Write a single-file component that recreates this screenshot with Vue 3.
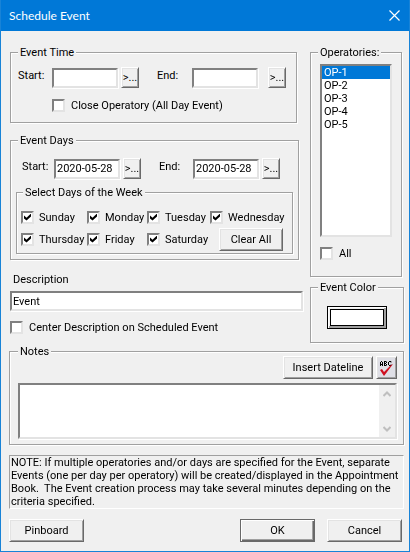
<template>
  <form class="dialog" @submit.prevent>
    <header class="title-bar">
      <h1 class="title">Schedule Event</h1>
      <button class="close-btn" type="button" aria-label="Close">
        <svg width="11" height="11" viewBox="0 0 11 11">
          <path d="M0.5 0.5L10.5 10.5M10.5 0.5L0.5 10.5" stroke="#fff" stroke-width="1.2" fill="none" />
        </svg>
      </button>
    </header>

    <main class="body">
      <div class="columns">
        <div class="main-col">
          <fieldset class="group time-group">
            <legend>Event Time</legend>
            <div class="range-row time-row">
              <label for="time-start">Start:</label>
              <input id="time-start" ref="timeStart" v-model="time.start" class="field" type="text" />
              <button class="btn pick-btn" type="button">&gt;...</button>
              <label for="time-end" class="end-label">End:</label>
              <input id="time-end" v-model="time.end" class="field" type="text" />
              <button class="btn pick-btn" type="button">&gt;...</button>
            </div>
            <label class="check all-day">
              <input v-model="allDay" type="checkbox" />
              <span>Close Operatory (All Day Event)</span>
            </label>
          </fieldset>

          <fieldset class="group days-group">
            <legend>Event Days</legend>
            <div class="range-row date-row">
              <label for="date-start">Start:</label>
              <input id="date-start" v-model="dates.start" class="field" type="text" />
              <button class="btn pick-btn" type="button">&gt;...</button>
              <label for="date-end" class="end-label">End:</label>
              <input id="date-end" v-model="dates.end" class="field" type="text" />
              <button class="btn pick-btn" type="button">&gt;...</button>
            </div>
            <fieldset class="group week-group">
              <legend>Select Days of the Week</legend>
              <div class="week">
                <label v-for="day in days" :key="day.name" class="check">
                  <input v-model="day.checked" type="checkbox" />
                  <span>{{ day.name }}</span>
                </label>
                <button class="btn clear-btn" type="button" @click="clearDays">Clear All</button>
              </div>
            </fieldset>
          </fieldset>

          <div class="description">
            <label for="description">Description</label>
            <input id="description" v-model="description" class="field" type="text" />
          </div>
          <label class="check center-check">
            <input v-model="centered" type="checkbox" />
            <span>Center Description on Scheduled Event</span>
          </label>
        </div>

        <div class="side-col">
          <fieldset class="group op-group">
            <legend id="op-legend">Operatories:</legend>
            <select v-model="selectedOps" class="op-list" multiple aria-labelledby="op-legend">
              <option v-for="op in operatories" :key="op" :value="op">{{ op }}</option>
            </select>
            <label class="check">
              <input v-model="allOps" type="checkbox" />
              <span>All</span>
            </label>
          </fieldset>

          <fieldset class="group color-group">
            <legend>Event Color</legend>
            <button class="swatch" type="button" aria-label="Event Color">
              <span class="swatch-fill" :style="{ background: color }"></span>
            </button>
          </fieldset>
        </div>
      </div>

      <fieldset class="group notes-group">
        <legend id="notes-legend">Notes</legend>
        <div class="notes-tools">
          <button class="btn dateline-btn" type="button">Insert Dateline</button>
          <button class="btn spell-btn" type="button" aria-label="Check spelling">
            <svg width="15" height="16" viewBox="0 0 15 16">
              <g fill="none" stroke="#000" stroke-width="1">
                <path d="M1.5 6V2M2 1.5H3M3.5 2V6M1.5 4.5H3.5" />
                <path d="M5.5 1V6M5 1.5H7.5M7.5 2V3M5 3.5H7M7.5 4V5M5 5.5H7.5" />
                <path d="M12 2.5V1.5H10M9.5 2V5M10 5.5H12V4.5" />
              </g>
              <path d="M1 10L3 9L5 12L12 5L14 4L5 16Z" fill="#d01020" />
            </svg>
          </button>
        </div>
        <div class="notes-box">
          <textarea v-model="notes" aria-labelledby="notes-legend"></textarea>
          <div class="scroll-track">
            <svg width="8" height="6" viewBox="0 0 8 6">
              <path d="M0.5 5L4 1.5L7.5 5" fill="none" stroke="#bfbfbf" stroke-width="2" />
            </svg>
            <svg width="8" height="6" viewBox="0 0 8 6">
              <path d="M0.5 1L4 4.5L7.5 1" fill="none" stroke="#bfbfbf" stroke-width="2" />
            </svg>
          </div>
        </div>
      </fieldset>

      <p class="hint">NOTE: If multiple operatories and/or days are specified for the Event, separate Events (one per day per operatory) will be created/displayed in the Appointment Book.&nbsp; The Event creation process may take several minutes depending on the criteria specified.</p>

      <footer class="actions">
        <button class="btn pin-btn" type="button">Pinboard</button>
        <button class="btn default-btn" type="submit">OK</button>
        <button class="btn" type="button">Cancel</button>
      </footer>
    </main>
  </form>
</template>

<script setup>
import { onMounted, reactive, ref } from 'vue'

const timeStart = ref(null)
const time = reactive({ start: '', end: '' })
const dates = reactive({ start: '2020-05-28', end: '2020-05-28' })
const allDay = ref(false)

const days = reactive(
  ['Sunday', 'Monday', 'Tuesday', 'Wednesday', 'Thursday', 'Friday', 'Saturday'].map((name) => ({
    name,
    checked: true
  }))
)

const operatories = ['OP-1', 'OP-2', 'OP-3', 'OP-4', 'OP-5']
const selectedOps = ref(['OP-1'])
const allOps = ref(false)

const description = ref('Event')
const centered = ref(false)
const color = ref('#ffffff')
const notes = ref('')

const clearDays = () => {
  days.forEach((day) => {
    day.checked = false
  })
}

onMounted(() => timeStart.value.focus())
</script>

<style>
body {
  margin: 0;
  background: #f0f0f0;
}
</style>

<style scoped>
.dialog {
  box-sizing: border-box;
  min-height: 100vh;
  border: 1px solid #1883d7;
  border-top: 0;
  background: #f0f0f0;
  color: #000;
  font-family: Roboto, "Liberation Sans", Arial, sans-serif;
  font-size: 11px;
  line-height: 13px;
}

.dialog * {
  box-sizing: border-box;
}

.title-bar {
  display: flex;
  align-items: center;
  justify-content: space-between;
  height: 31px;
  padding: 0 9px 0 8px;
  background: #0078d7;
}

.title {
  margin: 0;
  color: #fff;
  font-family: Lato, "Open Sans", sans-serif;
  font-size: 12px;
  font-weight: 400;
  line-height: 16px;
}

.close-btn {
  display: flex;
  padding: 0;
  border: 0;
  background: none;
}

.body {
  padding: 15px 5px 9px 8px;
}

.columns {
  display: flex;
  gap: 7px;
}

.main-col {
  flex: 1;
  min-width: 0;
  padding-left: 1px;
}

.side-col {
  width: 94px;
}

/* etched frame: grey line with a white one beside it */
.group {
  min-width: 0;
  margin: 0;
  padding: 0 7px;
  border: 1px solid #a0a0a0;
  box-shadow: 1px 1px 0 #fff, inset 1px 1px 0 #fff;
}

legend {
  padding: 0 2px;
  background: #f0f0f0;
}

.time-group {
  margin-right: 6px;
  padding: 8px 7px 10px;
}

.days-group {
  margin: 11px 4px 0 0;
  padding: 11px 5px 5px;
}

.days-group > legend {
  margin-left: 2px;
}

.range-row {
  display: grid;
  align-items: center;
}

.range-row label {
  align-self: start;
  line-height: 17px;
}

.time-row {
  grid-template-columns: 34px 66px 21px 53px 66px 28px;
}

.date-row {
  grid-template-columns: 32px 66px 21px 52px 66px 21px;
  margin-left: 6px;
}

.end-label {
  padding-left: 18px;
}

.field {
  width: 100%;
  height: 20px;
  margin: 0;
  padding: 0 1px;
  border: 2px solid;
  border-color: #808080 #e3e3e3 #e3e3e3 #808080;
  border-radius: 0;
  outline: 0;
  box-shadow: 1px 1px 0 #fff;
  background: #fff;
  color: #000;
  font: inherit;
}

.btn {
  height: 23px;
  margin: 0;
  padding: 0;
  border: 1px solid;
  border-color: #fff #696969 #696969 #fff;
  border-radius: 0;
  box-shadow: inset 1px 1px 0 #e3e3e3, inset -1px -1px 0 #a0a0a0;
  background: #f0f0f0;
  color: #000;
  font: inherit;
}

.pick-btn {
  justify-self: end;
  width: 18px;
  height: 21px;
}

.check {
  display: flex;
  align-items: center;
}

.check input {
  display: grid;
  flex: none;
  place-content: center;
  width: 13px;
  height: 13px;
  margin: 0 6px 0 0;
  border: 2px solid;
  border-color: #808080 #e3e3e3 #e3e3e3 #808080;
  appearance: none;
  background: #fff;
}

.check input:checked::before {
  width: 7px;
  height: 7px;
  background: #000;
  clip-path: polygon(0 28%, 36% 60%, 100% 0, 100% 42%, 36% 100%, 0 70%);
  content: "";
}

.all-day {
  margin: 11px 0 0 34px;
}

.week-group {
  margin-top: 7px;
  padding: 0 4px 5px;
}

.week-group legend {
  margin-left: 2px;
}

.week {
  display: grid;
  grid-template-columns: 66px 60px 63px 1fr;
  grid-template-rows: 26px 18px;
  align-items: center;
  padding-top: 5px;
}

.week .check {
  white-space: nowrap;
}

.week .check input {
  margin-right: 5px;
}

.clear-btn {
  width: 64px;
  margin-left: 9px;
}

.description {
  display: flex;
  flex-direction: column;
  gap: 5px;
  margin-top: 13px;
}

.description label {
  padding-left: 3px;
}

.center-check {
  margin-top: 10px;
}

.op-group {
  margin-right: 2px;
  padding: 5px 9px 16px;
}

.op-group legend {
  margin-left: -2px;
}

.op-list {
  display: block;
  width: 100%;
  height: 173px;
  margin: 0 0 10px;
  padding: 0;
  border: 2px solid;
  border-color: #808080 #e3e3e3 #e3e3e3 #808080;
  border-radius: 0;
  outline: 0;
  appearance: none;
  overflow: hidden;
  background: #fff;
  color: #000;
  font: inherit;
}

.op-list option {
  min-height: 13px;
  padding: 0 2px;
  line-height: 13px;
}

.op-list option:checked {
  background: #0078d7 linear-gradient(#0078d7, #0078d7);
  -webkit-text-fill-color: #fff;
}

.color-group {
  margin-top: 4px;
  padding: 12px 7px 13px;
}

.swatch {
  display: block;
  width: 60px;
  height: 23px;
  margin: 0 auto;
  padding: 0;
  border: 1px solid #000;
  border-radius: 0;
  background: #f0f0f0;
  box-shadow: inset 1px 1px 0 #fff, inset -2px -2px 0 #a0a0a0;
}

.swatch-fill {
  display: block;
  height: 17px;
  margin: 2px;
  border: 1px solid #000;
}

.notes-group {
  margin-top: 2px;
  padding: 0 6px 5px 8px;
}

.notes-tools {
  display: flex;
  justify-content: flex-end;
  gap: 3px;
  margin-top: -2px;
}

.dateline-btn {
  width: 90px;
}

.spell-btn {
  display: flex;
  align-items: center;
  justify-content: center;
  width: 21px;
  background: #dfdfe6;
}

.notes-box {
  display: flex;
  height: 56px;
  margin-top: 4px;
  border: 2px solid;
  border-color: #808080 #e3e3e3 #e3e3e3 #808080;
  box-shadow: 1px 1px 0 #fff;
}

.notes-box textarea {
  flex: 1;
  min-width: 0;
  padding: 1px 2px;
  border: 0;
  outline: 0;
  background: #fff;
  color: #000;
  font: inherit;
  resize: none;
}

.scroll-track {
  display: flex;
  flex-direction: column;
  align-items: center;
  justify-content: space-between;
  width: 16px;
  padding: 6px 0 5px;
  background: #f0f0f0;
}

.hint {
  margin: 10px 0 0;
  padding: 0 0 0 1px;
  border: 1px solid;
  border-color: #a0a0a0 #fff #fff #a0a0a0;
}

.actions {
  display: flex;
  gap: 12px;
  margin-top: 10px;
  padding-right: 2px;
}

.actions .btn {
  width: 75px;
}

.actions .pin-btn {
  margin-right: auto;
}

.actions .default-btn {
  border-color: #696969;
  box-shadow: inset 1px 1px 0 #fff, inset -1px -1px 0 #696969, inset -2px -2px 0 #a0a0a0;
}
</style>
